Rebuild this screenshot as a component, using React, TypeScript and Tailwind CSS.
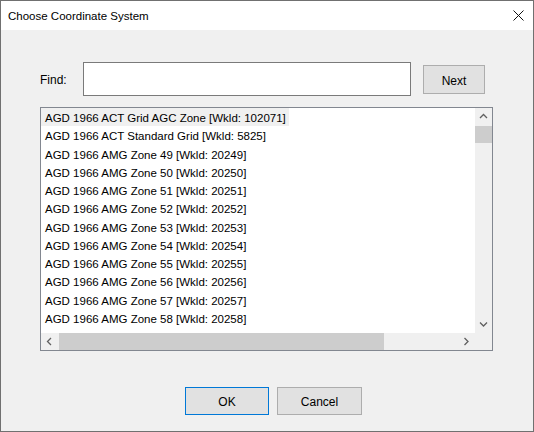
const items = [
  "AGD 1966 ACT Grid AGC Zone [Wkld: 102071]",
  "AGD 1966 ACT Standard Grid [Wkld: 5825]",
  "AGD 1966 AMG Zone 49 [Wkld: 20249]",
  "AGD 1966 AMG Zone 50 [Wkld: 20250]",
  "AGD 1966 AMG Zone 51 [Wkld: 20251]",
  "AGD 1966 AMG Zone 52 [Wkld: 20252]",
  "AGD 1966 AMG Zone 53 [Wkld: 20253]",
  "AGD 1966 AMG Zone 54 [Wkld: 20254]",
  "AGD 1966 AMG Zone 55 [Wkld: 20255]",
  "AGD 1966 AMG Zone 56 [Wkld: 20256]",
  "AGD 1966 AMG Zone 57 [Wkld: 20257]",
  "AGD 1966 AMG Zone 58 [Wkld: 20258]",
  "AGD 1966 AMG Zone 59 [Wkld: 20259]",
];

function Chevron({ dir }: { dir: "up" | "down" | "left" | "right" }) {
  const paths = {
    up: "M1 5 L4.5 1.5 L8 5",
    down: "M1 1.5 L4.5 5 L8 1.5",
    left: "M5 1 L1.5 4.5 L5 8",
    right: "M1.5 1 L5 4.5 L1.5 8",
  };
  const vertical = dir === "up" || dir === "down";
  return (
    <svg
      width={vertical ? 9 : 7}
      height={vertical ? 7 : 9}
      viewBox={vertical ? "0 0 9 7" : "0 0 7 9"}
      fill="none"
      stroke="#606060"
      strokeWidth="1.3"
    >
      <path d={paths[dir]} />
    </svg>
  );
}

export default function App() {
  return (
    <div
      className="w-[534px] h-[432px] border border-[#707070] bg-[#f0f0f0] flex flex-col text-[11.5px] text-black"
      style={{ fontFamily: '"Segoe UI", "Liberation Sans", Arial, sans-serif' }}
    >
      {/* title bar */}
      <div className="h-[29px] bg-white flex items-center justify-between pl-[7px] pr-[9px] shrink-0">
        <span className="leading-none pt-[2px]">Choose Coordinate System</span>
        <svg width="11" height="11" viewBox="0 0 11 11" stroke="#111" strokeWidth="1">
          <path d="M0.5 0.5 L10.5 10.5 M10.5 0.5 L0.5 10.5" />
        </svg>
      </div>

      <div className="flex flex-col px-[39px] pt-[32px]">
        {/* find row */}
        <div className="flex items-start">
          <span className="w-[43px] mt-[11px] leading-[14px] text-[12px]">Find:</span>
          <input
            className="w-[328px] h-[34px] border border-[#7a7a7a] bg-white outline-none px-1"
            defaultValue=""
          />
          <button className="ml-[12px] mt-[3px] w-[62px] h-[29px] border border-[#adadad] bg-[#e1e1e1] text-[12px] pt-[2px]">
            Next
          </button>
        </div>

        {/* list box */}
        <div className="mt-[11px] w-[453px] h-[244px] border border-[#828790] bg-white flex flex-col">
          <div className="flex flex-1 min-h-0">
            <div className="flex-1 overflow-hidden">
              {items.map((it, i) => (
                <div key={i} className="h-[18.27px] flex items-center">
                  <span
                    className={`pl-[4px] pr-[3px] pt-[3px] h-full flex items-center whitespace-nowrap ${
                      i === 0 ? "bg-[#f0f0f0]" : ""
                    }`}
                  >
                    {it}
                  </span>
                </div>
              ))}
            </div>
            {/* vertical scrollbar */}
            <div className="w-[17px] bg-[#f0f0f0] flex flex-col items-center">
              <div className="h-[17px] flex items-center justify-center">
                <Chevron dir="up" />
              </div>
              <div className="mt-[1px] w-[17px] h-[17px] bg-[#cdcdcd]" />
              <div className="flex-1" />
              <div className="h-[17px] flex items-center justify-center">
                <Chevron dir="down" />
              </div>
            </div>
          </div>
          {/* horizontal scrollbar */}
          <div className="h-[17px] bg-[#f0f0f0] flex items-center shrink-0">
            <div className="w-[17px] h-full flex items-center justify-center">
              <Chevron dir="left" />
            </div>
            <div className="ml-[1px] w-[325px] h-full bg-[#cdcdcd]" />
            <div className="flex-1" />
            <div className="w-[17px] h-full flex items-center justify-center">
              <Chevron dir="right" />
            </div>
            <div className="w-[17px] h-full" />
          </div>
        </div>

        {/* buttons */}
        <div className="mt-[36px] pl-[145px] flex gap-[8px] text-[12px]">
          <button className="w-[84px] h-[28px] border border-[#0078d7] bg-[#e1e1e1] pt-[1px]">OK</button>
          <button className="w-[85px] h-[28px] border border-[#adadad] bg-[#e1e1e1] pt-[1px]">Cancel</button>
        </div>
      </div>
    </div>
  );
}
